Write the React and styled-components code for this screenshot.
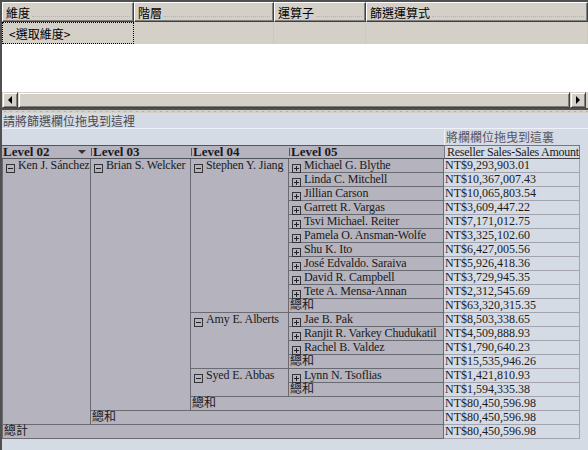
import styled, { createGlobalStyle } from 'styled-components';

const GlobalStyle = createGlobalStyle`
  html, body {
    margin: 0;
    padding: 0;
    background: #ffffff;
  }
  body {
    font-family: "Liberation Serif", "Noto Sans CJK TC", serif;
    font-size: 12px;
    color: #1a1a1a;
  }
  * {
    box-sizing: border-box;
  }
`;

const CJK = `"Noto Sans CJK TC", "Liberation Sans", sans-serif`;

const managers = [
  {
    name: 'Stephen Y. Jiang',
    total: 'NT$63,320,315.35',
    people: [
      ['Michael G. Blythe', 'NT$9,293,903.01'],
      ['Linda C. Mitchell', 'NT$10,367,007.43'],
      ['Jillian Carson', 'NT$10,065,803.54'],
      ['Garrett R. Vargas', 'NT$3,609,447.22'],
      ['Tsvi Michael. Reiter', 'NT$7,171,012.75'],
      ['Pamela O. Ansman-Wolfe', 'NT$3,325,102.60'],
      ['Shu K. Ito', 'NT$6,427,005.56'],
      ['José Edvaldo. Saraiva', 'NT$5,926,418.36'],
      ['David R. Campbell', 'NT$3,729,945.35'],
      ['Tete A. Mensa-Annan', 'NT$2,312,545.69'],
    ],
  },
  {
    name: 'Amy E. Alberts',
    total: 'NT$15,535,946.26',
    people: [
      ['Jae B. Pak', 'NT$8,503,338.65'],
      ['Ranjit R. Varkey Chudukatil', 'NT$4,509,888.93'],
      ['Rachel B. Valdez', 'NT$1,790,640.23'],
    ],
  },
  {
    name: 'Syed E. Abbas',
    total: 'NT$1,594,335.38',
    people: [['Lynn N. Tsoflias', 'NT$1,421,810.93']],
  },
];

const GRAND = 'NT$80,450,596.98';

const App = () => {
  const cells = [];
  let row = 2;
  managers.forEach((m) => {
    cells.push(
      <RowHead key={m.name} $col={3} $row={row} $rowSpan={m.people.length + 1}>
        <Toggle $open />
        {m.name}
      </RowHead>
    );
    m.people.forEach(([name, value]) => {
      cells.push(
        <RowHead key={name} $col={4} $row={row}>
          <Toggle />
          {name}
        </RowHead>,
        <ValueCell key={name + 'v'} $row={row}>{value}</ValueCell>
      );
      row += 1;
    });
    cells.push(
      <TotalHead key={m.name + 't'} $col={4} $row={row}>總和</TotalHead>,
      <ValueCell key={m.name + 'tv'} $row={row}>{m.total}</ValueCell>
    );
    row += 1;
  });

  return (
    <>
      <GlobalStyle />
      <Frame>
        <FilterPanel>
          <HeaderRow>
            {['維度', '階層', '運算子', '篩選運算式'].map((t) => (
              <HeaderCell key={t}>
                {t}
                <Leader />
              </HeaderCell>
            ))}
          </HeaderRow>
          <SelectRow>
            <SelectCell $focused>&lt;選取維度&gt;</SelectCell>
            <SelectCell />
            <SelectCell />
            <SelectCell />
          </SelectRow>
          <BlankArea />
          <ScrollBar>
            <ScrollButton>
              <Arrow $dir="left" />
            </ScrollButton>
            <Thumb />
            <ScrollButton>
              <Arrow $dir="right" />
            </ScrollButton>
          </ScrollBar>
        </FilterPanel>
        <Splitter />
        <PivotArea>
          <FilterDrop>請將篩選欄位拖曳到這裡</FilterDrop>
          <ColumnDrop>
            <span />
            <ColumnDropCell>將欄欄位拖曳到這裏</ColumnDropCell>
          </ColumnDrop>
          <PivotGrid>
            <LevelHead $first>
              Level 02
              <DropArrow />
            </LevelHead>
            <LevelHead>Level 03</LevelHead>
            <LevelHead>Level 04</LevelHead>
            <LevelHead>Level 05</LevelHead>
            <ValueHead>Reseller Sales-Sales Amount</ValueHead>

            <RowHead $col={1} $row={2} $rowSpan={19} $first>
              <Toggle $open />
              Ken J. Sánchez
            </RowHead>
            <RowHead $col={2} $row={2} $rowSpan={18}>
              <Toggle $open />
              Brian S. Welcker
            </RowHead>
            {cells}
            <TotalHead $col={3} $colSpan={2} $row={19}>總和</TotalHead>
            <ValueCell $row={19}>{GRAND}</ValueCell>
            <TotalHead $col={2} $colSpan={3} $row={20}>總和</TotalHead>
            <ValueCell $row={20}>{GRAND}</ValueCell>
            <TotalHead $col={1} $colSpan={4} $row={21} $first>總計</TotalHead>
            <ValueCell $row={21}>{GRAND}</ValueCell>
          </PivotGrid>
        </PivotArea>
      </Frame>
    </>
  );
};

export default App;

const Frame = styled.div`
  width: 588px;
  height: 450px;
  overflow: hidden;
  display: flex;
  flex-direction: column;
  border-top: 2px solid #505050;
  border-left: 2px solid #505050;
`;

const FilterPanel = styled.div`
  display: flex;
  flex-direction: column;
  background: #ffffff;
`;

const HeaderRow = styled.div`
  display: grid;
  grid-template-columns: 132px 140px 92px 1fr;
  height: 20px;
`;

const HeaderCell = styled.div`
  display: flex;
  align-items: center;
  padding-left: 3px;
  background: #d4d0c8;
  border-top: 1px solid #ffffff;
  border-left: 1px solid #ffffff;
  border-right: 1px solid #404040;
  border-bottom: 1px solid #404040;
  box-shadow: inset -1px -1px 0 #808080;
  font-family: ${CJK};
  font-size: 12px;
  color: #000000;
  white-space: nowrap;
`;

const Leader = styled.span`
  flex: 1;
  align-self: flex-end;
  margin: 0 3px 4px 2px;
  border-bottom: 1px dotted #b4b4b4;
`;

const SelectRow = styled.div`
  display: grid;
  grid-template-columns: 132px 140px 92px 1fr;
  height: 22px;
  background: #d4d0c8;
`;

const SelectCell = styled.div`
  display: flex;
  align-items: center;
  padding-left: 6px;
  font-family: ${CJK};
  font-size: 12px;
  color: #000000;
  border: ${(p) => (p.$focused ? '1px dotted #000000' : 'none')};
  border-right: ${(p) => (p.$focused ? '1px dotted #000000' : '1px solid #cdc9c1')};
`;

const BlankArea = styled.div`
  height: 48px;
  background: #ffffff;
`;

const ScrollBar = styled.div`
  display: flex;
  height: 16px;
  background: #d4d0c8;
  padding-right: 2px;
`;

const raised = `
  background: #d4d0c8;
  border-top: 1px solid #d4d0c8;
  border-left: 1px solid #d4d0c8;
  border-right: 1px solid #404040;
  border-bottom: 1px solid #404040;
  box-shadow: inset 1px 1px 0 #ffffff, inset -1px -1px 0 #808080;
`;

const ScrollButton = styled.div`
  ${raised}
  width: 16px;
  height: 16px;
  display: flex;
  align-items: center;
  justify-content: center;
`;

const Arrow = styled.span`
  width: 0;
  height: 0;
  border-top: 4px solid transparent;
  border-bottom: 4px solid transparent;
  border-${(p) => (p.$dir === 'left' ? 'right' : 'left')}: 4px solid #000000;
`;

const Thumb = styled.div`
  ${raised}
  flex: 1;
`;

const Splitter = styled.div`
  height: 5px;
  background: #d4d0c8;
  border-top: 2px solid #505050;
  background-image: radial-gradient(circle, #b0b0b0 0.5px, transparent 0.7px);
  background-size: 6px 3px;
`;

const PivotArea = styled.div`
  flex: 1;
  background: #d5dbe5;
  display: flex;
  flex-direction: column;
`;

const FilterDrop = styled.div`
  height: 16px;
  line-height: 15px;
  padding-left: 1px;
  font-family: ${CJK};
  font-size: 12px;
  color: #4a4a52;
  border-bottom: 1px solid #eef1f5;
`;

const ColumnDrop = styled.div`
  display: grid;
  grid-template-columns: 442px 136px;
  height: 16px;
`;

const ColumnDropCell = styled.div`
  padding-left: 1px;
  line-height: 15px;
  font-family: ${CJK};
  font-size: 12px;
  color: #55555e;
  border-left: 1px solid #eef1f5;
  white-space: nowrap;
`;

const PivotGrid = styled.div`
  display: grid;
  grid-template-columns: 89px 100px 98px 155px 136px;
  grid-auto-rows: 14px;
  width: 578px;
`;

const LevelHead = styled.div`
  grid-row: 1;
  position: relative;
  display: flex;
  align-items: center;
  padding-left: ${(p) => (p.$first ? '1px' : '2px')};
  background: #b5b3bd;
  border-top: 1px solid #55555c;
  border-bottom: 1px solid #55555c;
  font-family: "Liberation Serif", serif;
  font-weight: bold;
  font-size: 13px;
  color: #1a1a1a;
  white-space: nowrap;

  &::before {
    content: '';
    display: ${(p) => (p.$first ? 'none' : 'block')};
    position: absolute;
    left: 0;
    top: 2px;
    bottom: 2px;
    border-left: 1px solid #55555c;
  }
`;

const DropArrow = styled.span`
  margin-left: auto;
  margin-right: 5px;
  width: 0;
  height: 0;
  border-left: 4px solid transparent;
  border-right: 4px solid transparent;
  border-top: 4px solid #333333;
`;

const ValueHead = styled.div`
  grid-row: 1;
  grid-column: 5;
  padding-left: 2px;
  line-height: 12px;
  background: #d5dbe5;
  border: 1px solid #77777e;
  border-bottom-color: #404046;
  font-size: 12px;
  letter-spacing: -0.25px;
  white-space: nowrap;
  overflow: hidden;
`;

const RowHead = styled.div`
  grid-column: ${(p) => p.$col} / span ${(p) => p.$colSpan || 1};
  grid-row: ${(p) => p.$row} / span ${(p) => p.$rowSpan || 1};
  display: flex;
  align-items: flex-start;
  gap: 3px;
  padding-left: 3px;
  background: #b5b3bd;
  border-right: 1px solid #6a6a72;
  border-bottom: 1px solid #6a6a72;
  border-left: ${(p) => (p.$first ? '1px solid #6a6a72' : 'none')};
  font-size: 12px;
  line-height: 13px;
  letter-spacing: -0.15px;
  color: #1a1a1a;
  white-space: nowrap;
`;

const TotalHead = styled(RowHead)`
  padding-left: 1px;
  line-height: 13px;
  letter-spacing: 0;
`;

const Toggle = styled.span`
  flex: none;
  position: relative;
  width: 9px;
  height: 9px;
  margin-top: 5px;
  border: 1px solid #333338;

  &::before {
    content: '';
    position: absolute;
    left: 1px;
    right: 1px;
    top: 3px;
    height: 1px;
    background: #222226;
  }

  &::after {
    content: '';
    display: ${(p) => (p.$open ? 'none' : 'block')};
    position: absolute;
    top: 1px;
    bottom: 1px;
    left: 3px;
    width: 1px;
    background: #222226;
  }
`;

const ValueCell = styled.div`
  grid-column: 5;
  grid-row: ${(p) => p.$row};
  padding-left: 1px;
  border-right: 1px solid #a3a3ae;
  border-bottom: 1px solid #a3a3ae;
  font-size: 12px;
  line-height: 13px;
  color: #1a1a1a;
  white-space: nowrap;
`;
